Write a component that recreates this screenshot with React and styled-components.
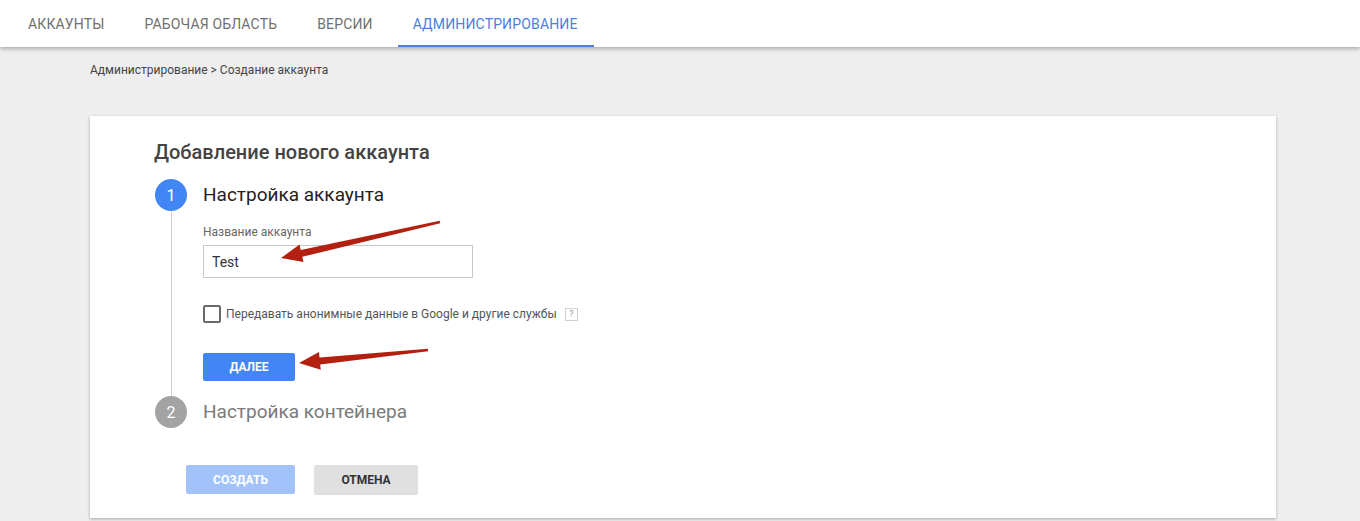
import React from 'react';
import styled, { createGlobalStyle } from 'styled-components';

const GlobalStyle = createGlobalStyle`
  body {
    margin: 0;
    background: #eeeeee;
    font-family: Roboto, "Liberation Sans", Arial, sans-serif;
    overflow: hidden;
  }
`;

const Page = styled.div`
  position: relative;
  min-height: 521px;
`;

const TopBar = styled.nav`
  height: 47px;
  background: #fff;
  box-shadow: 0 2px 4px rgba(0, 0, 0, 0.28);
  display: flex;
  padding-left: 8px;
  position: relative;
  z-index: 1;
`;

const Tab = styled.div`
  display: flex;
  align-items: center;
  padding: 0 20px;
  font-size: 14px;
  letter-spacing: 0.15px;
  text-transform: uppercase;
  color: ${(p) => (p.$active ? '#4a80e0' : '#6f6f6f')};
  position: relative;

  &::after {
    content: '';
    display: ${(p) => (p.$active ? 'block' : 'none')};
    position: absolute;
    left: 5px;
    right: 4px;
    bottom: 0;
    height: 2px;
    background: #4a80e0;
  }
`;

const Main = styled.main`
  padding: 15px 84px 0 90px;
`;

const Crumbs = styled.div`
  font-size: 12px;
  line-height: 16px;
  color: #444;
  margin-bottom: 38px;
`;

const Card = styled.section`
  background: #fff;
  box-shadow: 0 1px 3px rgba(0, 0, 0, 0.3);
  padding: 24px 64px 24px 65px;
`;

const Heading = styled.h2`
  margin: 0 0 15px -1px;
  font-size: 20px;
  line-height: 24px;
  font-weight: 500;
  color: #444;
`;

const Step = styled.div`
  display: grid;
  grid-template-columns: 32px 1fr;
  column-gap: 16px;
  align-items: center;
`;

const Circle = styled.div`
  width: 32px;
  height: 32px;
  border-radius: 50%;
  background: ${(p) => (p.$done ? '#4285f4' : '#a3a3a3')};
  color: #fff;
  font-size: 16px;
  display: flex;
  align-items: center;
  justify-content: center;
`;

const StepTitle = styled.div`
  font-size: 19px;
  line-height: 32px;
  color: ${(p) => (p.$muted ? '#7a7a7a' : '#222')};
`;

const Rail = styled.div`
  align-self: stretch;
  justify-self: center;
  width: 1px;
  background: #cfcfcf;
  margin-bottom: -9px;
`;

const StepBody = styled.div`
  padding: 14px 0 15px 0;
  display: flex;
  flex-direction: column;
  align-items: flex-start;
`;

const FieldLabel = styled.label`
  font-size: 12px;
  line-height: 14px;
  color: #666;
  margin-bottom: 6px;
`;

const Input = styled.input`
  box-sizing: border-box;
  width: 270px;
  height: 33px;
  border: 1px solid #c8c8c8;
  padding: 0 8px;
  font-family: inherit;
  font-size: 14px;
  color: #333;
  outline: none;
  margin-bottom: 27px;
`;

const CheckRow = styled.div`
  display: flex;
  align-items: center;
  gap: 5px;
  font-size: 12px;
  color: #555;
  margin-bottom: 30px;
`;

const Box = styled.span`
  box-sizing: border-box;
  width: 18px;
  height: 18px;
  border: 2px solid #6a6a6a;
  border-radius: 2px;
`;

const Help = styled.span`
  box-sizing: border-box;
  width: 13px;
  height: 13px;
  margin-left: 3px;
  border: 1px solid #d0d0d0;
  font-size: 9px;
  line-height: 11px;
  text-align: center;
  color: #999;
`;

const Button = styled.button`
  box-sizing: border-box;
  height: ${(p) => p.$h || 28}px;
  width: ${(p) => p.$w}px;
  border: none;
  border-radius: 2px;
  font-family: inherit;
  font-size: 12px;
  font-weight: 700;
  text-transform: uppercase;
  color: ${(p) => (p.$kind === 'gray' ? '#333' : '#fff')};
  background: ${(p) =>
    p.$kind === 'gray' ? '#e0e0e0' : p.$kind === 'faded' ? '#a2c3fa' : '#4285f4'};
  box-shadow: ${(p) => (p.$kind === 'gray' ? '0 1px 1px rgba(0,0,0,0.15)' : 'none')};
`;

const Actions = styled.div`
  display: flex;
  gap: 19px;
  padding-left: 31px;
  margin-top: 37px;
`;

const Overlay = styled.svg`
  position: absolute;
  left: 0;
  top: 0;
  width: 1360px;
  height: 521px;
  pointer-events: none;
  z-index: 2;
`;

const Arrow = ({ x1, y1, x2, y2 }) => {
  const dx = x2 - x1;
  const dy = y2 - y1;
  const len = Math.hypot(dx, dy);
  const ux = dx / len;
  const uy = dy / len;
  const nx = -uy;
  const ny = ux;
  const bx = x2 - ux * 21;
  const by = y2 - uy * 21;
  const pt = (x, y) => `${x.toFixed(1)},${y.toFixed(1)}`;
  const points = [
    pt(x2, y2),
    pt(bx + nx * 9, by + ny * 9),
    pt(bx + nx * 3.5, by + ny * 3.5),
    pt(x1 + nx * 1.3, y1 + ny * 1.3),
    pt(x1 - nx * 1.3, y1 - ny * 1.3),
    pt(bx - nx * 3.5, by - ny * 3.5),
    pt(bx - nx * 9, by - ny * 9),
  ].join(' ');
  return <polygon points={points} fill="#b4200f" />;
};

const App = () => {
  return (
    <Page>
      <GlobalStyle />
      <TopBar>
        <Tab>Аккаунты</Tab>
        <Tab>Рабочая область</Tab>
        <Tab>Версии</Tab>
        <Tab $active>Администрирование</Tab>
      </TopBar>
      <Main>
        <Crumbs>Администрирование &gt; Создание аккаунта</Crumbs>
        <Card>
          <Heading>Добавление нового аккаунта</Heading>
          <Step>
            <Circle $done>1</Circle>
            <StepTitle>Настройка аккаунта</StepTitle>
            <Rail />
            <StepBody>
              <FieldLabel>Название аккаунта</FieldLabel>
              <Input defaultValue="Test" />
              <CheckRow>
                <Box />
                <span>Передавать анонимные данные в Google и другие службы</span>
                <Help>?</Help>
              </CheckRow>
              <Button $w={92}>Далее</Button>
            </StepBody>
          </Step>
          <Step>
            <Circle>2</Circle>
            <StepTitle $muted>Настройка контейнера</StepTitle>
          </Step>
          <Actions>
            <Button $kind="faded" $w={109} $h={29}>Создать</Button>
            <Button $kind="gray" $w={104} $h={29}>Отмена</Button>
          </Actions>
        </Card>
      </Main>
      <Overlay viewBox="0 0 1360 521">
        <Arrow x1={440} y1={222} x2={281} y2={258} />
        <Arrow x1={428} y1={350} x2={299} y2={363} />
      </Overlay>
    </Page>
  );
};

export default App;
